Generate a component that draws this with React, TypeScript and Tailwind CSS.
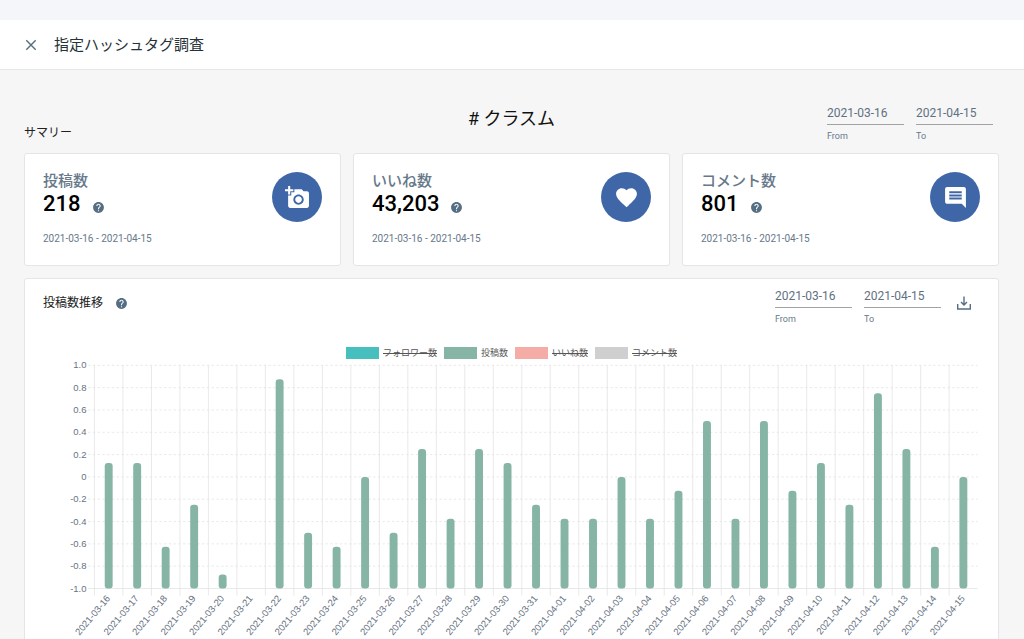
import { useState } from 'react';
import type { ReactNode } from 'react';
import { MdAddAPhoto, MdComment, MdFavorite, MdHelp } from 'react-icons/md';

const posts = [
  ['2021-03-16', 9], ['2021-03-17', 9], ['2021-03-18', 3], ['2021-03-19', 6], ['2021-03-20', 1],
  ['2021-03-21', 0], ['2021-03-22', 15], ['2021-03-23', 4], ['2021-03-24', 3], ['2021-03-25', 8],
  ['2021-03-26', 4], ['2021-03-27', 10], ['2021-03-28', 5], ['2021-03-29', 10], ['2021-03-30', 9],
  ['2021-03-31', 6], ['2021-04-01', 5], ['2021-04-02', 5], ['2021-04-03', 8], ['2021-04-04', 5],
  ['2021-04-05', 7], ['2021-04-06', 12], ['2021-04-07', 5], ['2021-04-08', 12], ['2021-04-09', 7],
  ['2021-04-10', 9], ['2021-04-11', 6], ['2021-04-12', 14], ['2021-04-13', 10], ['2021-04-14', 3],
  ['2021-04-15', 8],
] as [string, number][];

const yTicks = ['1.0', '0.8', '0.6', '0.4', '0.2', '0', '-0.2', '-0.4', '-0.6', '-0.8', '-1.0'];

const legend = [
  { name: 'フォロワー数', color: 'bg-[#48bfbf]' },
  { name: '投稿数', color: 'bg-[#86b5a5]' },
  { name: 'いいね数', color: 'bg-[#f5aca6]' },
  { name: 'コメント数', color: 'bg-[#cfcfcf]' },
];

// plot area, in viewBox units
const LEFT = 65;
const TOP = 8;
const COL = 36;
const PLOT_H = 282;
const BOTTOM = TOP + PLOT_H;
const RIGHT = LEFT + COL * posts.length;

function BarChart({ showPosts }: { showPosts: boolean }) {
  return (
    <svg viewBox="0 0 1184 364" className="block w-full font-['Liberation_Sans',sans-serif]" role="img" aria-label="投稿数推移">
      {yTicks.map((t, i) => {
        const y = TOP + (PLOT_H / 10) * i;
        return (
          <g key={t}>
            <line x1={LEFT - 8} x2={RIGHT} y1={y} y2={y} stroke="#e3e3e3" strokeDasharray={i === 10 ? undefined : '3 3'} />
            <text x={LEFT - 10} y={y + 4} textAnchor="end" fontSize="12" fill="#66727f">{t}</text>
          </g>
        );
      })}
      {posts.map(([date, n], i) => {
        const x = LEFT + COL * i;
        const h = (n / 16) * PLOT_H;
        return (
          <g key={date}>
            <line x1={x} x2={x} y1={TOP} y2={BOTTOM + 9} stroke="#e3e3e3" />
            {showPosts && n > 0 && <rect x={x + 13} y={BOTTOM - h} width="10" height={h} rx="4" fill="#86b5a5" />}
            <text transform={`translate(${x + 16} ${BOTTOM + 9}) rotate(-50)`} y="6" textAnchor="end" fontSize="12" fill="#66727f">{date}</text>
          </g>
        );
      })}
    </svg>
  );
}

function DateField({ id, label, value }: { id: string; label: string; value: string }) {
  return (
    <div className="w-[77px]">
      <input id={id} type="text" defaultValue={value} className="block h-[21px] w-full border-b border-[#a3a3a3] bg-transparent pb-0.5 text-xs text-[#5f7081] outline-none" />
      <label htmlFor={id} className="mt-[5px] block text-[9px] leading-3 text-[#66788a]">{label}</label>
    </div>
  );
}

function DateRange({ id }: { id: string }) {
  return (
    <div className="flex gap-3">
      <DateField id={`${id}-from`} label="From" value="2021-03-16" />
      <DateField id={`${id}-to`} label="To" value="2021-04-15" />
    </div>
  );
}

function HelpButton({ className = '' }: { className?: string }) {
  return (
    <button type="button" aria-label="ヘルプ" className={`text-[#546e84] ${className}`}>
      <MdHelp size={13} />
    </button>
  );
}

function SummaryCard({ title, value, icon }: { title: string; value: string; icon: ReactNode }) {
  return (
    <section className="flex items-start justify-between rounded-[3px] border border-[#e4e5e7] bg-white px-[18px] pt-[18px] pb-5">
      <div>
        <h3 className="text-[15px] leading-[18px] font-medium text-[#66788a]">{title}</h3>
        <div className="flex items-end gap-[11px]">
          <span className="text-[22px] leading-7 font-medium text-black">{value}</span>
          <HelpButton className="mb-1" />
        </div>
        <p className="mt-[15px] text-[10px] leading-3 text-[#66788a]">2021-03-16 - 2021-04-15</p>
      </div>
      <div className="flex size-[50px] items-center justify-center rounded-full bg-[#3f67a8] text-white">{icon}</div>
    </section>
  );
}

export default function App() {
  const [hidden, setHidden] = useState(['フォロワー数', 'いいね数', 'コメント数']);

  function toggle(name: string) {
    setHidden(h => (h.includes(name) ? h.filter(n => n !== name) : [...h, name]));
  }

  return (
    <div className="min-h-screen bg-[#f6f6f6] font-[Roboto,'Noto_Sans_CJK_JP',sans-serif]">
      <div className="h-5 bg-[#f4f6f9]" />
      <header className="flex h-[50px] items-center gap-[17px] border-b border-[#e6e6e6] bg-white pl-[25px]">
        <button type="button" aria-label="閉じる" className="text-[#546e7a]">
          <svg width="12" height="12" viewBox="0 0 12 12" fill="none" stroke="currentColor" strokeWidth="1.4">
            <path d="M1.3 1.3l9.4 9.4M10.7 1.3l-9.4 9.4" />
          </svg>
        </button>
        <h1 className="text-[15px] leading-5 text-[#263238]">指定ハッシュタグ調査</h1>
      </header>

      <main className="pt-[34px] pr-[25px] pb-6 pl-6">
        <div className="grid grid-cols-[1fr_auto_1fr] items-end">
          <h2 className="text-xs leading-[18px] text-[#212121]">サマリー</h2>
          <p className="self-start text-lg leading-[30px] text-[#111]"># クラスム</p>
          <div className="flex justify-end pr-1.5">
            <DateRange id="summary" />
          </div>
        </div>

        <div className="mt-[11px] grid grid-cols-3 gap-3">
          <SummaryCard title="投稿数" value="218" icon={<MdAddAPhoto size={25} />} />
          <SummaryCard title="いいね数" value="43,203" icon={<MdFavorite size={25} />} />
          <SummaryCard title="コメント数" value="801" icon={<MdComment size={25} />} />
        </div>

        <section className="mt-3 rounded-[3px] border border-[#e4e5e7] bg-white px-[18px] pt-2 pb-5">
          <div className="flex items-start justify-between">
            <div className="flex items-center gap-3 pt-[7px]">
              <h2 className="text-xs leading-[18px] text-[#212121]">投稿数推移</h2>
              <HelpButton />
            </div>
            <div className="flex items-start gap-[15px] pr-2">
              <DateRange id="trend" />
              <button type="button" aria-label="ダウンロード" className="pt-2 text-[#546e84]">
                <svg width="16" height="16" viewBox="0 0 16 16" fill="none" stroke="currentColor" strokeWidth="1.4">
                  <path d="M8 1.5v8.3M5 7l3 3 3-3M1.7 9v5h12.6V9" />
                </svg>
              </button>
            </div>
          </div>

          <div className="mt-[22px] flex justify-center gap-[7px]">
            {legend.map(l => (
              <button key={l.name} type="button" onClick={() => toggle(l.name)} className="flex items-center gap-1">
                <span className={`h-3 w-[33px] ${l.color}`} />
                <span className={`text-[9px] leading-3 text-[#555] ${hidden.includes(l.name) ? 'line-through' : ''}`}>{l.name}</span>
              </button>
            ))}
          </div>
          <BarChart showPosts={!hidden.includes('投稿数')} />
        </section>
      </main>
    </div>
  );
}
